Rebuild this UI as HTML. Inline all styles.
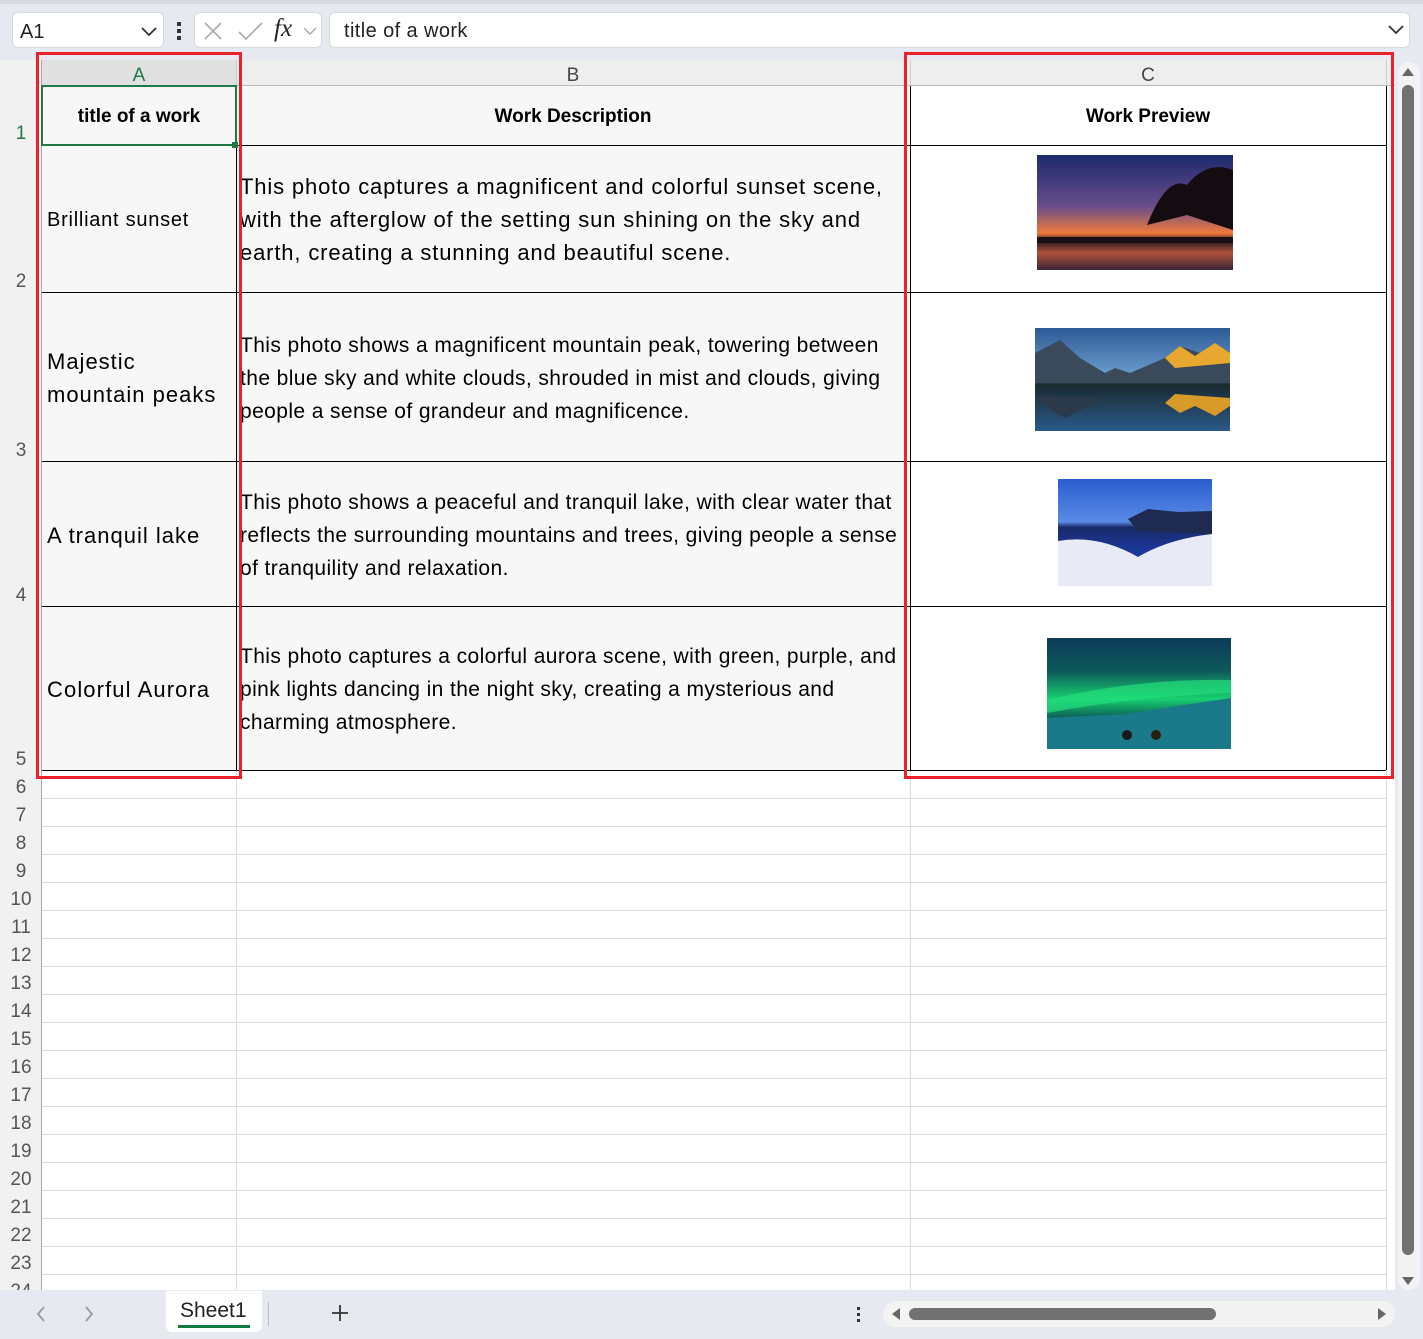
<!DOCTYPE html>
<html><head><meta charset="utf-8">
<style>
*{box-sizing:border-box;margin:0;padding:0}
body{width:1423px;height:1339px;overflow:hidden;background:#e6e9ef;font-family:"Liberation Sans",sans-serif;position:relative;color:#000}
.a{position:absolute}
.box{background:#fff;border:1px solid #d6d9de;border-radius:6px}
.rn{position:absolute;left:0;width:42px;text-align:center;font-size:19px;color:#555}
.hl{position:absolute;left:42px;width:1344px;height:1px;background:#dcdcdc}
.t{position:absolute;font-size:21px;letter-spacing:0.4px;line-height:33px;white-space:nowrap}
</style></head><body>
<div class="a" style="left:0;top:0;width:1423px;height:4px;background:#d8dbe0"></div>
<div class="a box" style="left:12px;top:12px;width:152px;height:36px"></div>
<div class="a" style="left:20px;top:21px;font-size:20px;color:#222">A1</div>
<svg class="a" style="left:140px;top:25px" width="18" height="12"><path d="M2 3 L9 10 L16 3" fill="none" stroke="#333" stroke-width="1.8"/></svg>
<div class="a" style="left:177px;top:22px;width:4px;height:4px;background:#333"></div>
<div class="a" style="left:177px;top:29px;width:4px;height:4px;background:#333"></div>
<div class="a" style="left:177px;top:36px;width:4px;height:4px;background:#333"></div>
<div class="a box" style="left:194px;top:12px;width:128px;height:36px"></div>
<svg class="a" style="left:202px;top:20px" width="118" height="22"><path d="M3 3 L19 19 M19 3 L3 19" stroke="#aaa" stroke-width="1.6"/><path d="M37 12 L44 19 L60 3" fill="none" stroke="#aaa" stroke-width="1.6"/><path d="M102 8 L108 14 L114 8" fill="none" stroke="#aaa" stroke-width="1.5"/></svg>
<div class="a" style="left:274px;top:15px;font-family:'Liberation Serif',serif;font-style:italic;font-size:25px;color:#222">fx</div>
<div class="a box" style="left:329px;top:12px;width:1081px;height:36px"></div>
<div class="a" style="left:344px;top:20px;font-size:20px;color:#222;letter-spacing:0.4px">title of a work</div>
<svg class="a" style="left:1387px;top:23px" width="18" height="12"><path d="M2 3 L9 10 L16 3" fill="none" stroke="#333" stroke-width="1.8"/></svg>

<div class="a" style="left:0;top:60px;width:1395px;height:1230px;background:#fff"></div>
<div class="a" style="left:0;top:60px;width:1395px;height:26px;background:#eeeeee;border-bottom:1px solid #bbb"></div>
<div class="a" style="left:0;top:60px;width:42px;height:1230px;background:#f1f1f1;border-right:1px solid #aaa"></div>
<div class="a" style="left:42px;top:60px;width:194px;height:26px;background:#e0e0e0"></div>
<div class="a" style="left:42px;top:65px;width:194px;text-align:center;font-size:19px;color:#1d7a45">A</div>
<div class="a" style="left:236px;top:65px;width:674px;text-align:center;font-size:19px;color:#444">B</div>
<div class="a" style="left:910px;top:65px;width:476px;text-align:center;font-size:19px;color:#444">C</div>
<div class="a" style="left:236px;top:60px;width:1px;height:26px;background:#ccc"></div>
<div class="a" style="left:910px;top:60px;width:1px;height:26px;background:#ccc"></div>
<div class="a" style="left:1386px;top:60px;width:1px;height:26px;background:#ccc"></div>

<div class="a" style="left:42px;top:86px;width:868px;height:684px;background:#f7f7f7"></div>
<div class="a" style="left:236px;top:770px;width:1px;height:520px;background:#dcdcdc"></div>
<div class="a" style="left:910px;top:770px;width:1px;height:520px;background:#dcdcdc"></div>
<div class="a" style="left:1386px;top:770px;width:1px;height:520px;background:#dcdcdc"></div>
<div class="hl" style="top:798px"></div><div class="hl" style="top:826px"></div><div class="hl" style="top:854px"></div><div class="hl" style="top:882px"></div><div class="hl" style="top:910px"></div><div class="hl" style="top:938px"></div><div class="hl" style="top:966px"></div><div class="hl" style="top:994px"></div><div class="hl" style="top:1022px"></div><div class="hl" style="top:1050px"></div><div class="hl" style="top:1078px"></div><div class="hl" style="top:1106px"></div><div class="hl" style="top:1134px"></div><div class="hl" style="top:1162px"></div><div class="hl" style="top:1190px"></div><div class="hl" style="top:1218px"></div><div class="hl" style="top:1246px"></div><div class="hl" style="top:1274px"></div>
<div class="a" style="left:236px;top:86px;width:1px;height:684px;background:#000"></div>
<div class="a" style="left:910px;top:86px;width:1px;height:684px;background:#000"></div>
<div class="a" style="left:1386px;top:86px;width:1px;height:684px;background:#000"></div>
<div class="a" style="left:42px;top:145px;width:1344px;height:1px;background:#000"></div>
<div class="a" style="left:42px;top:292px;width:1344px;height:1px;background:#000"></div>
<div class="a" style="left:42px;top:461px;width:1344px;height:1px;background:#000"></div>
<div class="a" style="left:42px;top:606px;width:1344px;height:1px;background:#000"></div>
<div class="a" style="left:42px;top:770px;width:1344px;height:1px;background:#000"></div>
<div class="a" style="left:41px;top:85px;width:196px;height:61px;border:2px solid #1d7a45"></div>
<div class="a" style="left:232px;top:142px;width:6px;height:6px;background:#1d7a45"></div>

<div class="rn" style="top:123px;color:#1d7a45">1</div>
<div class="rn" style="top:271px">2</div>
<div class="rn" style="top:440px">3</div>
<div class="rn" style="top:585px">4</div>
<div class="rn" style="top:749px">5</div>
<div class="rn" style="top:777px">6</div><div class="rn" style="top:805px">7</div><div class="rn" style="top:833px">8</div><div class="rn" style="top:861px">9</div><div class="rn" style="top:889px">10</div><div class="rn" style="top:917px">11</div><div class="rn" style="top:945px">12</div><div class="rn" style="top:973px">13</div><div class="rn" style="top:1001px">14</div><div class="rn" style="top:1029px">15</div><div class="rn" style="top:1057px">16</div><div class="rn" style="top:1085px">17</div><div class="rn" style="top:1113px">18</div><div class="rn" style="top:1141px">19</div><div class="rn" style="top:1169px">20</div><div class="rn" style="top:1197px">21</div><div class="rn" style="top:1225px">22</div><div class="rn" style="top:1253px">23</div><div class="rn" style="top:1281px">24</div>

<div class="a" style="left:42px;top:106px;width:194px;text-align:center;font-size:19px;font-weight:bold">title of a work</div>
<div class="a" style="left:236px;top:106px;width:674px;text-align:center;font-size:19px;font-weight:bold">Work Description</div>
<div class="a" style="left:910px;top:106px;width:476px;text-align:center;font-size:19px;font-weight:bold">Work Preview</div>

<div class="t" style="left:47px;top:204px;font-size:20px;letter-spacing:0.75px">Brilliant sunset</div>
<div class="t" style="left:47px;top:345px;font-size:22px;letter-spacing:1px">Majestic<br>mountain peaks</div>
<div class="t" style="left:47px;top:519px;font-size:22px;letter-spacing:1px">A tranquil lake</div>
<div class="t" style="left:47px;top:673px;font-size:22px;letter-spacing:1.1px">Colorful Aurora</div>

<div class="t" style="left:240px;top:170px;font-size:22px;letter-spacing:0.85px">This photo captures a magnificent and colorful sunset scene,<br>with the afterglow of the setting sun shining on the sky and<br>earth, creating a stunning and beautiful scene.</div>
<div class="t" style="left:240px;top:329px">This photo shows a magnificent mountain peak, towering between<br>the blue sky and white clouds, shrouded in mist and clouds, giving<br>people a sense of grandeur and magnificence.</div>
<div class="t" style="left:240px;top:486px">This photo shows a peaceful and tranquil lake, with clear water that<br>reflects the surrounding mountains and trees, giving people a sense<br>of tranquility and relaxation.</div>
<div class="t" style="left:240px;top:640px">This photo captures a colorful aurora scene, with green, purple, and<br>pink lights dancing in the night sky, creating a mysterious and<br>charming atmosphere.</div>

<svg class="a" style="left:1037px;top:155px" width="196" height="115">
<defs><linearGradient id="s1" x1="0" y1="0" x2="0" y2="1"><stop offset="0" stop-color="#1c2a6e"/><stop offset=".45" stop-color="#6a4d8a"/><stop offset=".68" stop-color="#f07a3a"/><stop offset=".75" stop-color="#2a1a20"/><stop offset=".85" stop-color="#b0503a"/><stop offset="1" stop-color="#3a2436"/></linearGradient></defs>
<rect width="196" height="115" fill="url(#s1)"/>
<path d="M110 70 Q130 20 150 30 Q170 5 196 15 L196 75 L150 60 Z" fill="#150c12"/>
<rect x="0" y="82" width="196" height="6" fill="#1a1014"/>
</svg>
<svg class="a" style="left:1035px;top:328px" width="195" height="103">
<defs><linearGradient id="m1" x1="0" y1="0" x2="0" y2="1"><stop offset="0" stop-color="#2d5a96"/><stop offset=".45" stop-color="#6a9ccc"/><stop offset=".55" stop-color="#1a2a30"/><stop offset="1" stop-color="#2a5a8a"/></linearGradient></defs>
<rect width="195" height="103" fill="url(#m1)"/>
<path d="M0 25 L25 12 L45 30 L70 45 L80 40 L95 45 L130 30 L145 18 L165 25 L180 15 L195 25 L195 55 L0 55Z" fill="#3a4a5a"/>
<path d="M130 30 L145 18 L160 28 L180 15 L195 25 L195 35 L140 40Z" fill="#e8a830"/>
<path d="M130 75 L145 85 L160 78 L180 88 L195 78 L195 70 L140 66Z" fill="#d89a28"/>
<path d="M0 72 L30 90 L70 70 L0 68Z" fill="#2a3a4a"/>
</svg>
<svg class="a" style="left:1058px;top:479px" width="154" height="107">
<defs><linearGradient id="l1" x1="0" y1="0" x2="0" y2="1"><stop offset="0" stop-color="#2a5ed0"/><stop offset=".4" stop-color="#5a8ae6"/><stop offset=".45" stop-color="#1a2a6a"/><stop offset=".7" stop-color="#1a3aa0"/></linearGradient></defs>
<rect width="154" height="107" fill="url(#l1)"/>
<path d="M70 40 L90 30 L120 33 L154 32 L154 55 L80 52Z" fill="#1e2a50"/>
<path d="M0 62 Q40 55 80 78 Q110 60 154 55 L154 107 L0 107Z" fill="#e8eaf5"/>
</svg>
<svg class="a" style="left:1047px;top:638px" width="184" height="111">
<defs><linearGradient id="a1" x1="0" y1="0" x2="0" y2="1"><stop offset="0" stop-color="#0c3a5a"/><stop offset=".3" stop-color="#0d5a5a"/><stop offset=".55" stop-color="#18d070"/><stop offset=".7" stop-color="#0c6a5a"/><stop offset="1" stop-color="#0a4a5a"/></linearGradient></defs>
<rect width="184" height="111" fill="url(#a1)"/>
<path d="M0 62 Q90 40 184 42 L184 55 Q90 58 0 75Z" fill="#22e07a" opacity=".7"/>
<path d="M0 80 L80 76 L130 68 L184 60 L184 111 L0 111Z" fill="#1a7a8a"/>
<circle cx="80" cy="97" r="5" fill="#1a1a1a"/><circle cx="109" cy="97" r="5" fill="#2a2010"/>
</svg>

<div class="a" style="left:36px;top:52px;width:206px;height:727px;border:3px solid #e8212b"></div>
<div class="a" style="left:904px;top:52px;width:490px;height:727px;border:3px solid #e8212b"></div>

<div class="a" style="left:1396px;top:60px;width:27px;height:1230px;background:#e6e9ef"></div>
<div class="a" style="left:1398px;top:62px;width:22px;height:1228px;background:#f3f3f3;border-radius:11px"></div>
<svg class="a" style="left:1400px;top:66px" width="16" height="12"><path d="M2 10 L8 2 L14 10Z" fill="#666"/></svg>
<div class="a" style="left:1402px;top:85px;width:12px;height:1170px;background:#717171;border-radius:6px"></div>
<svg class="a" style="left:1400px;top:1275px" width="16" height="12"><path d="M2 2 L8 10 L14 2Z" fill="#666"/></svg>

<div class="a" style="left:0;top:1290px;width:1423px;height:49px;background:#e6e9ef"></div>
<svg class="a" style="left:33px;top:1304px" width="70" height="20"><path d="M11 3 L5 10 L11 17" fill="none" stroke="#999" stroke-width="1.8"/><path d="M53 3 L59 10 L53 17" fill="none" stroke="#999" stroke-width="1.8"/></svg>
<div class="a" style="left:166px;top:1291px;width:96px;height:41px;background:#fff;border-radius:0 0 6px 6px"></div>
<div class="a" style="left:180px;top:1299px;font-size:21px;color:#222">Sheet1</div>
<div class="a" style="left:178px;top:1325px;width:72px;height:3px;background:#107c41"></div>
<div class="a" style="left:268px;top:1302px;width:1px;height:24px;background:#bbb"></div>
<svg class="a" style="left:330px;top:1303px" width="20" height="20"><path d="M10 2 V18 M2 10 H18" stroke="#333" stroke-width="1.8"/></svg>
<div class="a" style="left:857px;top:1307px;width:3px;height:3px;background:#333"></div>
<div class="a" style="left:857px;top:1313px;width:3px;height:3px;background:#333"></div>
<div class="a" style="left:857px;top:1319px;width:3px;height:3px;background:#333"></div>
<div class="a" style="left:883px;top:1301px;width:512px;height:26px;background:#f3f3f3;border-radius:13px"></div>
<svg class="a" style="left:889px;top:1306px" width="14" height="16"><path d="M11 2 L3 8 L11 14Z" fill="#666"/></svg>
<div class="a" style="left:909px;top:1308px;width:307px;height:12px;background:#717171;border-radius:6px"></div>
<svg class="a" style="left:1375px;top:1306px" width="14" height="16"><path d="M3 2 L11 8 L3 14Z" fill="#666"/></svg>
</body></html>
